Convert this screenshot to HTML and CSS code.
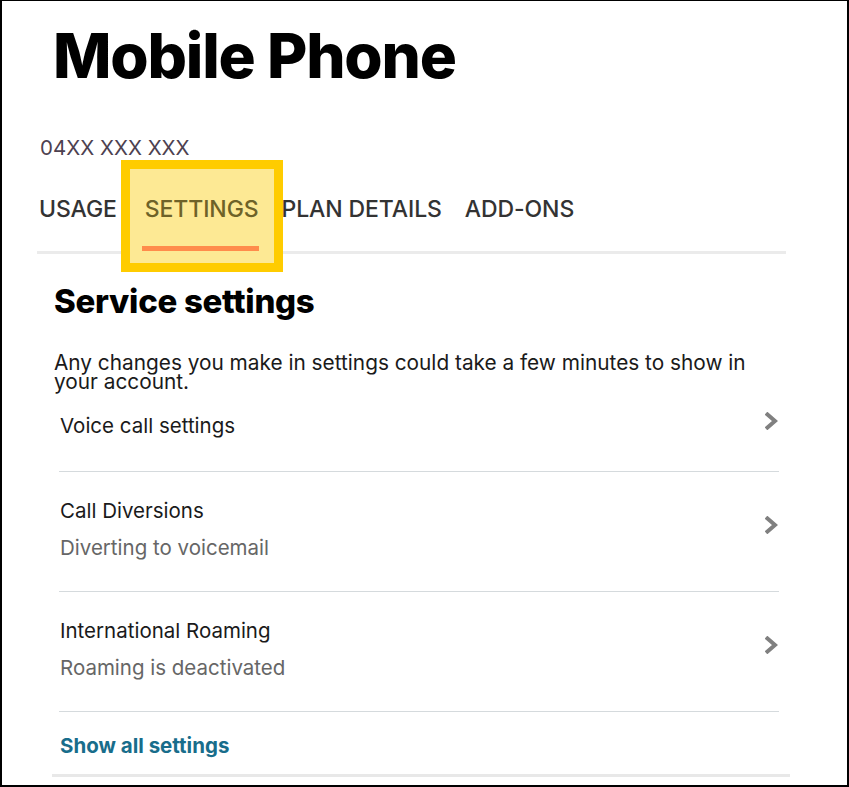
FILE: index.html
```html
<!DOCTYPE html>
<html lang="en">
<head>
<meta charset="utf-8">
<title>Mobile Phone</title>
<link rel="stylesheet" href="styles.css">
</head>
<body>
<div class="frame">
  <header class="header">
    <h1 class="title">Mobile Phone</h1>
    <div class="number">04XX XXX XXX</div>
    <nav class="tabs">
      <a class="tab">USAGE</a>
      <a class="tab tab-active"><span class="highlight"></span><span class="tab-label">SETTINGS</span></a>
      <a class="tab">PLAN DETAILS</a>
      <a class="tab">ADD-ONS</a>
    </nav>
    <div class="tabs-rule"></div>
  </header>
  <section class="card">
    <h2 class="card-title">Service settings</h2>
    <p class="card-note">Any changes you make in settings could take a few minutes to show in your account.</p>
    <ul class="list">
      <li class="item">
        <div class="item-text">
          <div class="item-title">Voice call settings</div>
        </div>
        <svg class="chevron" viewBox="0 0 13 18" width="13" height="18"><polyline points="2.5,2.5 10,9 2.5,15.5" fill="none" stroke="#808080" stroke-width="4" stroke-linecap="square" stroke-linejoin="miter"/></svg>
      </li>
      <li class="item">
        <div class="item-text">
          <div class="item-title">Call Diversions</div>
          <div class="item-sub">Diverting to voicemail</div>
        </div>
        <svg class="chevron" viewBox="0 0 13 18" width="13" height="18"><polyline points="2.5,2.5 10,9 2.5,15.5" fill="none" stroke="#808080" stroke-width="4" stroke-linecap="square" stroke-linejoin="miter"/></svg>
      </li>
      <li class="item">
        <div class="item-text">
          <div class="item-title">International Roaming</div>
          <div class="item-sub">Roaming is deactivated</div>
        </div>
        <svg class="chevron" viewBox="0 0 13 18" width="13" height="18"><polyline points="2.5,2.5 10,9 2.5,15.5" fill="none" stroke="#808080" stroke-width="4" stroke-linecap="square" stroke-linejoin="miter"/></svg>
      </li>
    </ul>
    <a class="show-all">Show all settings</a>
    <div class="card-rule"></div>
  </section>
</div>
</body>
</html>
```
FILE: styles.css
```css
html, body {
  margin: 0;
  padding: 0;
  background: #fff;
}
body {
  font-family: Inter, "Noto Sans", sans-serif;
  color: #1a1a1a;
}
.frame {
  width: 849px;
  height: 787px;
  box-sizing: border-box;
  border: 2px solid #000;
  border-top-width: 1px;
  overflow: hidden;
}
.header {
  padding-left: 37px;
}
.title {
  margin: 23px 0 0 14px;
  font-size: 62px;
  line-height: 64px;
  font-weight: 800;
  letter-spacing: -1.2px;
  color: #000;
}
.number {
  margin-top: 48px;
  margin-left: 1px;
  font-size: 20.5px;
  line-height: 24px;
  color: #4d4150;
}
.tabs {
  display: flex;
  gap: 23px;
  margin-top: 35px;
  height: 56px;
}
.tab {
  position: relative;
  font-size: 23px;
  line-height: 28px;
  font-weight: 500;
  letter-spacing: -0.1px;
  color: #333;
}
.tab-active {
  margin-left: 2px;
  padding-left: 3px;
}
.tab-active::after {
  content: "";
  position: absolute;
  left: 0;
  right: 0;
  bottom: 0;
  height: 5px;
  background: #ff8c4b;
  z-index: 2;
}
.tab-label {
  position: relative;
  z-index: 2;
  color: #6e6228;
}
.highlight {
  position: absolute;
  left: -21px;
  right: -24px;
  top: -35px;
  bottom: -21px;
  box-sizing: border-box;
  border: 9px solid #ffcc00;
  background: #fde994;
  z-index: 1;
}
.tabs-rule {
  margin-left: -2px;
  width: 749px;
  height: 3px;
  background: #ebebeb;
}
.card {
  margin-left: 50px;
  width: 738px;
}
.card-title {
  margin: 27px 0 0 2px;
  font-size: 33px;
  line-height: 40px;
  font-weight: 800;
  letter-spacing: -0.3px;
  color: #000;
}
.card-note {
  margin: 32px 0 0 2px;
  width: 710px;
  font-size: 20.8px;
  line-height: 19px;
  color: #1a1a1a;
}
.list {
  list-style: none;
  margin: -6px 11px 0 7px;
  padding: 0;
}
.item {
  display: flex;
  align-items: center;
  justify-content: space-between;
  padding: 27px 1px 31px 1px;
  border-bottom: 1px solid #d5dadd;
}
.item-title {
  font-size: 20.5px;
  line-height: 24px;
  color: #1a1a1a;
}
.item-sub {
  margin-top: 13px;
  font-size: 20.5px;
  line-height: 24px;
  color: #666;
}
.chevron {
  display: block;
  margin-bottom: 10px;
}
.show-all {
  display: block;
  margin: 22px 0 0 8px;
  font-size: 20.5px;
  line-height: 24px;
  font-weight: 700;
  color: #186d8b;
}
.card-rule {
  margin-top: 16px;
  height: 3px;
  background: #e8e8e8;
}
```
